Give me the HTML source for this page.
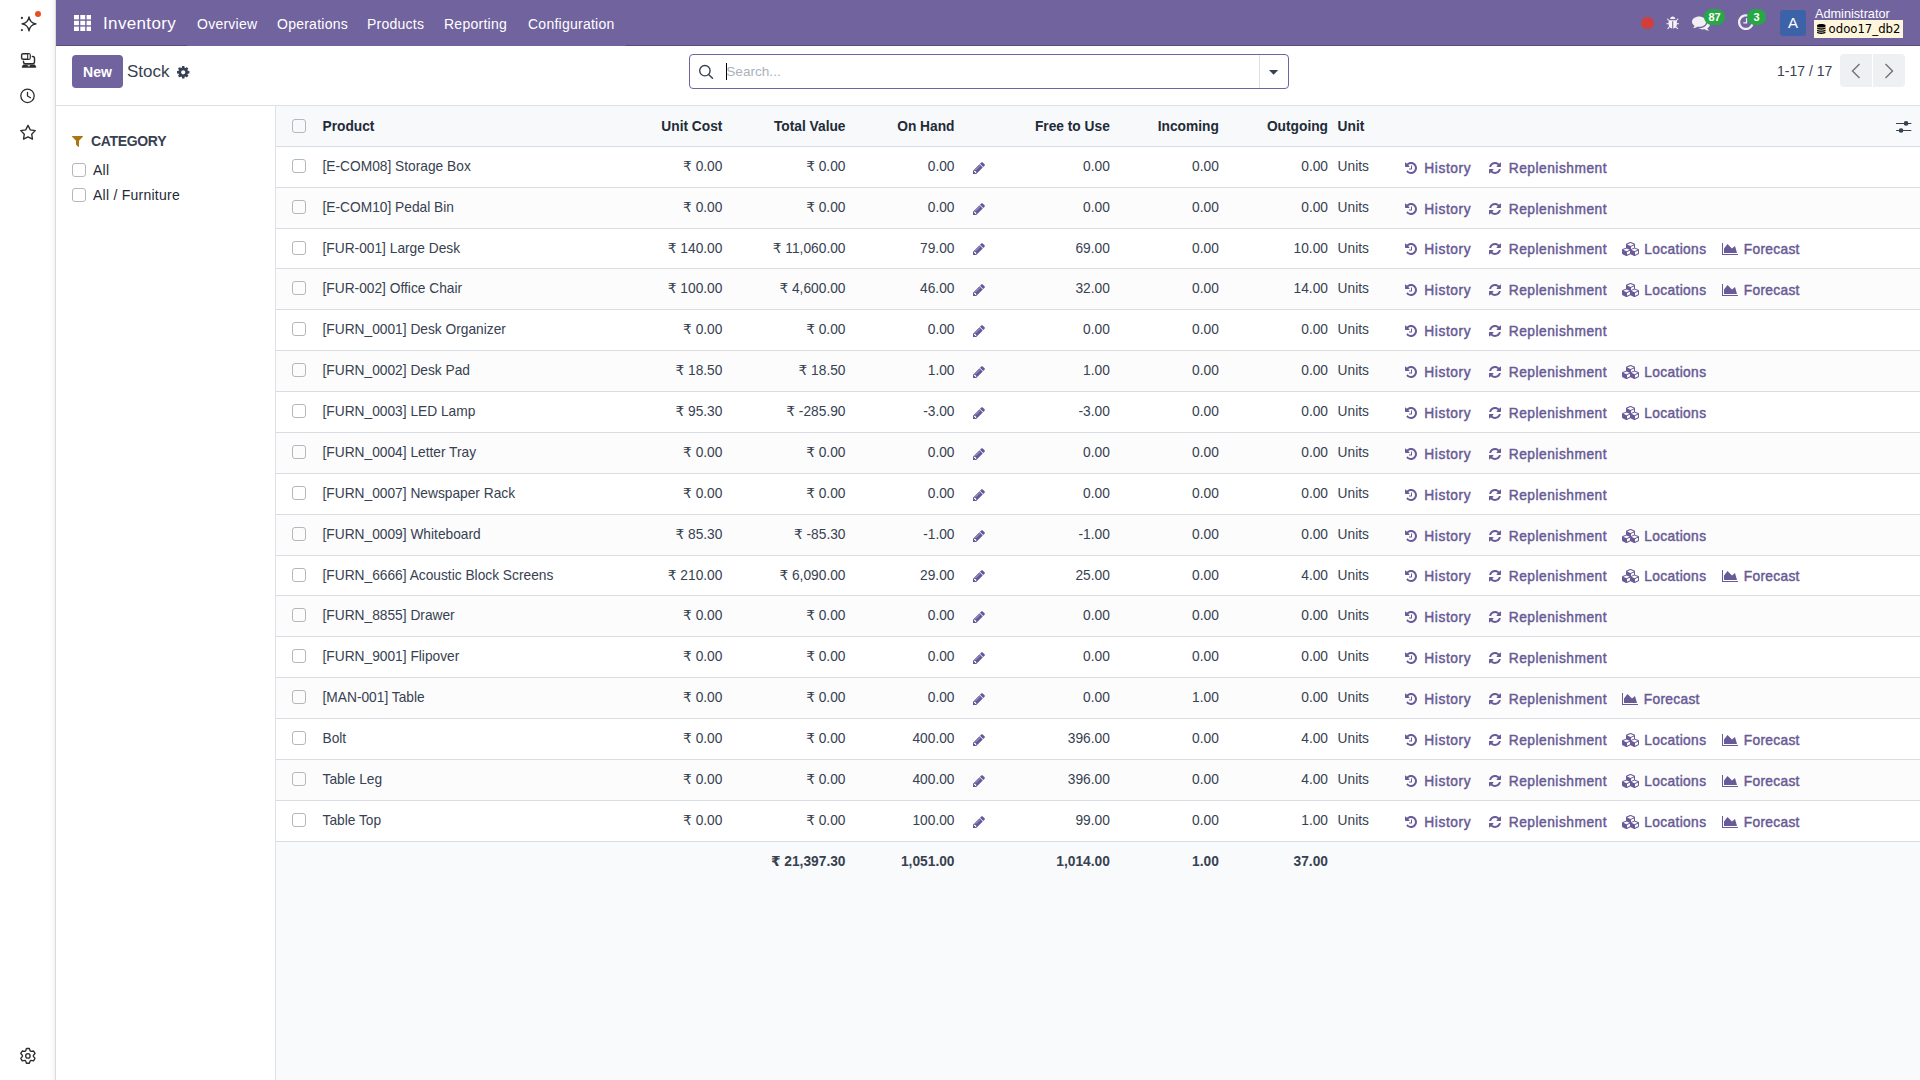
<!DOCTYPE html>
<html lang="en"><head><meta charset="utf-8"><title>Odoo - Stock</title>
<style>
*{box-sizing:border-box;margin:0;padding:0}
html,body{width:1920px;height:1080px;overflow:hidden;background:#fff}
body{font-family:"Liberation Sans","DejaVu Sans",sans-serif;font-size:14px;color:#374151;position:relative}
svg{display:block}
svg.fa{display:inline-block;overflow:visible}
.side{position:absolute;left:0;top:0;width:56px;height:1080px;background:#fff;border-right:1px solid #d8dadd;box-shadow:inset -5px 0 5px -4px rgba(0,0,0,.07)}
.side .si{position:absolute}
.nav{position:absolute;left:56px;top:0;width:1864px;height:46px;background:#71639e;color:#fff}
.nline{position:absolute;left:0;top:45px;width:131px;height:1px;background:#574b7c}
.nav .apps{position:absolute;left:17.8px;top:15px}
.brand{position:absolute;left:47px;top:14px;font-size:17px;line-height:20px;letter-spacing:.35px}
.mi{position:absolute;top:15px;font-size:14px;line-height:18px;letter-spacing:.25px;color:#fff}
.reddot{position:absolute;left:1585.3px;top:17.3px;width:12.6px;height:11.6px;border-radius:50%;background:#d23f3a}
.badge{position:absolute;top:9px;height:16px;border-radius:8px;background:#28a745;color:#fff;font-size:11px;line-height:16px;text-align:center;font-weight:700}
.avatar{position:absolute;left:1724px;top:10px;width:26px;height:26px;border-radius:3px;background:#3c62a8;color:#fff;font-size:15px;line-height:26px;text-align:center}
.uname{position:absolute;left:1759px;top:6.7px;font-size:12.7px;line-height:15px}
.db{position:absolute;left:1758px;top:20px;width:89px;height:18px;background:#fdf5dc;color:#000;font-family:"DejaVu Sans",sans-serif;font-size:11.7px;line-height:18px;padding-left:3px;white-space:nowrap}
.cp{position:absolute;left:56px;top:46px;width:1864px;height:60px;background:#fff;border-bottom:1px solid #dee2e6}
.new{position:absolute;left:16px;top:9px;width:51px;height:33px;border-radius:4px;background:#71639e;color:#fff;font-weight:700;font-size:14px;line-height:35px;text-align:center}
.title{position:absolute;left:71px;top:14.8px;font-size:17px;line-height:22px;color:#374151}
.search{position:absolute;left:633px;top:8px;width:600px;height:35px;border:1px solid #71639e;border-radius:4px;background:#fff}
.caretline{position:absolute;left:36px;top:8px;width:1px;height:17px;background:#000}
.ph{position:absolute;left:36.3px;top:8px;font-size:13.6px;line-height:18px;color:#aab1bc}
.sdiv{position:absolute;left:569px;top:0;width:1px;height:33px;background:#dee2e6}
.pager{position:absolute;left:1721px;top:16px;font-size:14px;line-height:18px}
.pbtn{position:absolute;top:8px;width:32px;height:33px;background:#eef0f2;display:flex;align-items:center;justify-content:center}
.sp{position:absolute;left:56px;top:106px;width:220px;height:974px;background:#fff;border-right:1px solid #dee2e6}
.cat{position:absolute;left:35px;top:25.8px;font-weight:700;font-size:14px;line-height:18px;letter-spacing:-.33px;color:#374151}
.scb{position:absolute;left:16.3px;margin-top:-1px;width:13.7px;height:13.7px;border:1px solid #b4b7bc;border-radius:3px;background:transparent}
.sl{position:absolute;left:37px;font-size:14px;line-height:22px;letter-spacing:.25px;color:#1f2937}
.list{position:absolute;left:276px;top:106px;width:1644px;height:974px;background:#f9fafb}
.row{position:absolute;left:0;width:1644px;border-bottom:1px solid #d8dde3;background:#fff;white-space:nowrap}
.row.odd{background:#fcfcfc}
.row.head{top:0;height:41px;background:#f8f9fa;font-weight:700;color:#222b38}
.head .c{top:11.2px}
.head .cb{top:13.3px}
.row.foot{background:transparent;border-bottom:0;font-weight:700}
.cb{position:absolute;left:16.25px;top:12.3px;width:13.5px;height:13.5px;border:1px solid #b4b7bc;border-radius:3px;background:transparent}
.c{position:absolute;top:10.2px;line-height:20px;font-size:13.75px}
.name{left:46.5px}
.n{text-align:right}
.uc{right:1197.6px}.tv{right:1074.5px}.oh{right:965.5px}.fu{right:810.2px}.inc{right:701.2px}.out{right:592px}
.unit{left:1061.6px}
.pen{position:absolute;left:697px;top:13px;color:#65579a}
.bi{position:absolute;top:13.2px;color:#695b98}
.bt{position:absolute;top:10.5px;line-height:20px;font-size:13.75px;color:#685a95;-webkit-text-stroke:.45px #685a95}
.tH{letter-spacing:.6px}.tR{letter-spacing:.5px}.tL{letter-spacing:.37px}.tF{letter-spacing:.3px}
.adj{position:absolute;left:1619.5px;top:14px}
.h41 .bi{top:14.2px}.h41 .bt{top:11.5px}.h41 .pen{top:14px}

</style></head>
<body>
<div class="side">
<svg class="si" style="left:0;top:0" width="56" height="150" viewBox="0 0 56 150">
<path d="M29 16.9 Q29.9 23.0 36.0 23.9 Q29.9 24.799999999999997 29 30.9 Q28.1 24.799999999999997 22.0 23.9 Q28.1 23.0 29 16.9Z" fill="none" stroke="#2c2c2c" stroke-width="1.35" stroke-linejoin="round"/>
<circle cx="21.900" cy="18" r="1.150" fill="#3a3a3a"/><circle cx="21.900" cy="30.100" r="1.150" fill="#3a3a3a"/>
<circle cx="38" cy="13.900" r="3" fill="#e8501f"/>
<rect x="21.600" y="53.800" width="8.600" height="5.400" rx="1.500" fill="none" stroke="#2c2c2c" stroke-width="1.400"/>
<path d="M27.700 54v5" stroke="#2c2c2c" stroke-width="1.100"/><rect x="28" y="54.400" width="1.800" height="4.200" fill="#cfcfcf"/>
<path d="M32.400 56.500h0.300a1.800 1.800 0 0 1 1.800 1.800v3.400a2 2 0 0 1-2 2h-7a2 2 0 0 1-2-2v-0.600" fill="none" stroke="#2c2c2c" stroke-width="1.400" stroke-linecap="round"/>
<path d="M23.300 64.600h11.400l1.400 1.800a.8.800 0 0 1-.6 1.300h-13a.8.800 0 0 1-.6-1.300z" fill="#2c2c2c"/>
<rect x="27.500" y="65.200" width="2.600" height="1" rx=".5" fill="#fff"/>
<circle cx="27.500" cy="95.850" r="6.700" fill="none" stroke="#2c2c2c" stroke-width="1.300"/>
<path d="M27.500 92.300v3.700l3 1.700" fill="none" stroke="#2c2c2c" stroke-width="1.300" stroke-linecap="round" stroke-linejoin="round"/>
<path d="M28.00 125.40 L25.71 129.84 L20.77 130.65 L24.29 134.21 L23.53 139.15 L28.00 136.90 L32.47 139.15 L31.71 134.21 L35.23 130.65 L30.29 129.84Z" fill="none" stroke="#2c2c2c" stroke-width="1.350" stroke-linejoin="round"/>
</svg>
<svg class="si" style="left:0;top:1040px" width="56" height="40" viewBox="0 1040 56 40">
<path d="M30.22 1050.92 L29.33 1048.54 L26.47 1048.54 L25.58 1050.92 L24.75 1051.39 L22.24 1050.98 L20.81 1053.46 L22.42 1055.42 L22.42 1056.38 L20.81 1058.34 L22.24 1060.82 L24.75 1060.41 L25.58 1060.88 L26.47 1063.26 L29.33 1063.26 L30.22 1060.88 L31.05 1060.41 L33.56 1060.82 L34.99 1058.34 L33.38 1056.38 L33.38 1055.42 L34.99 1053.46 L33.56 1050.98 L31.05 1051.39Z" fill="none" stroke="#2c2c2c" stroke-width="1.350" stroke-linejoin="round"/>
<circle cx="27.900" cy="1055.900" r="2.200" fill="none" stroke="#2c2c2c" stroke-width="1.300"/></svg>
</div>
<div class="nav">
 <svg class="apps" width="17.500" height="16" viewBox="0 0 17.500 16"><g fill="#fff"><rect x="0" y="0" width="4.900" height="4.400"/><rect x="6.3" y="0" width="4.900" height="4.400"/><rect x="12.6" y="0" width="4.900" height="4.400"/><rect x="0" y="5.8" width="4.900" height="4.400"/><rect x="6.3" y="5.8" width="4.900" height="4.400"/><rect x="12.6" y="5.8" width="4.900" height="4.400"/><rect x="0" y="11.6" width="4.900" height="4.400"/><rect x="6.3" y="11.6" width="4.900" height="4.400"/><rect x="12.6" y="11.6" width="4.900" height="4.400"/></g></svg>
 <span class="nline"></span><span class="nline" style="left:570px;width:1294px"></span>
 <span class="brand">Inventory</span>
 <span class="mi" style="left:141px">Overview</span>
 <span class="mi" style="left:221px">Operations</span>
 <span class="mi" style="left:311px">Products</span>
 <span class="mi" style="left:388px">Reporting</span>
 <span class="mi" style="left:472px">Configuration</span>
 <span class="reddot"></span>
 <svg class="fa " viewBox="0 0 1664 1792" width="13.46" height="14.5" style="position:absolute;left:1610.3px;top:15.6px;opacity:.92"><path fill="#fff" d="M1632 960C1632 925 1603 896 1568 896H1344C1344 768 1344 668 1344 602L1517 429C1542 404 1542 364 1517 339C1492 314 1452 314 1427 339L1254 512H410L237 339C212 314 172 314 147 339C122 364 122 404 147 429L320 602C320 668 320 768 320 896H96C61 896 32 925 32 960C32 995 61 1024 96 1024H320C320 1140 343 1229 378 1298L176 1525C153 1552 155 1592 181 1616C194 1627 209 1632 224 1632C242 1632 259 1625 272 1611L455 1404C455 1404 587 1536 768 1536V640H896V1536C1066 1536 1197 1416 1197 1416L1395 1613C1407 1626 1424 1632 1440 1632C1456 1632 1473 1626 1485 1613C1510 1588 1510 1548 1485 1523L1277 1314C1317 1243 1344 1149 1344 1024H1568C1603 1024 1632 995 1632 960ZM1152 384C1152 207 1009 64 832 64C655 64 512 207 512 384H1152Z"/></svg>
 <svg class="fa " viewBox="0 0 1792 1792" width="18.00" height="18" style="position:absolute;left:1636px;top:13.8px;opacity:.9"><path fill="#fff" d="M1408 768C1408 485 1093 256 704 256C315 256 0 485 0 768C0 930 104 1075 266 1169C232 1252 188 1291 149 1335C138 1348 125 1360 129 1379C129 1379 129 1379 129 1379C132 1396 146 1408 161 1408C162 1408 163 1408 164 1408C194 1404 223 1399 250 1392C351 1366 445 1323 528 1264C584 1274 643 1280 704 1280C1093 1280 1408 1051 1408 768ZM1792 1024C1792 857 1682 709 1513 616C1528 665 1536 716 1536 768C1536 947 1444 1112 1277 1234C1122 1346 919 1408 704 1408C675 1408 645 1406 616 1404C741 1486 907 1536 1088 1536C1149 1536 1208 1530 1264 1520C1347 1579 1441 1622 1542 1648C1569 1655 1598 1660 1628 1664C1644 1666 1659 1653 1663 1635C1663 1635 1663 1635 1663 1635C1667 1616 1654 1604 1643 1591C1604 1547 1560 1508 1526 1425C1688 1331 1792 1187 1792 1024Z"/></svg>
 <span class="badge" style="left:1648px;width:21px">87</span>
 <svg class="fa " viewBox="0 0 1536 1792" width="15.77" height="18.4" style="position:absolute;left:1682.4px;top:13.2px;opacity:.9"><path fill="#fff" d="M896 544C896 526 882 512 864 512H800C782 512 768 526 768 544V896H544C526 896 512 910 512 928V992C512 1010 526 1024 544 1024H864C882 1024 896 1010 896 992ZM1312 896C1312 1196 1068 1440 768 1440C468 1440 224 1196 224 896C224 596 468 352 768 352C1068 352 1312 596 1312 896ZM1536 896C1536 472 1192 128 768 128C344 128 0 472 0 896C0 1320 344 1664 768 1664C1192 1664 1536 1320 1536 896Z"/></svg>
 <span class="badge" style="left:1691px;width:19px">3</span>
 <span class="avatar">A</span>
 <span class="uname">Administrator</span>
 <span class="db"><svg class="fa " viewBox="0 0 1536 1792" width="8.57" height="10" style="vertical-align:-1px;margin-right:3px"><path fill="#000" d="M768 768C467 768 165 714 0 598V768C0 909 344 1024 768 1024C1192 1024 1536 909 1536 768V598C1371 714 1069 768 768 768ZM768 1536C467 1536 165 1482 0 1366V1536C0 1677 344 1792 768 1792C1192 1792 1536 1677 1536 1536V1366C1371 1482 1069 1536 768 1536ZM768 1152C467 1152 165 1098 0 982V1152C0 1293 344 1408 768 1408C1192 1408 1536 1293 1536 1152V982C1371 1098 1069 1152 768 1152ZM768 0C344 0 0 115 0 256V384C0 525 344 640 768 640C1192 640 1536 525 1536 384V256C1536 115 1192 0 768 0Z"/></svg><span>odoo17_db2</span></span>
</div>
<div class="cp">
 <span class="new">New</span>
 <span class="title">Stock</span>
 <svg class="fa " viewBox="0 0 1536 1792" width="12.43" height="14.5" style="position:absolute;left:121px;top:19px"><path fill="#374151" d="M1024 896C1024 1037 909 1152 768 1152C627 1152 512 1037 512 896C512 755 627 640 768 640C909 640 1024 755 1024 896ZM1536 787C1536 770 1524 754 1507 751L1324 723C1314 690 1300 657 1283 625C1317 578 1354 534 1388 488C1393 481 1396 474 1396 465C1396 457 1394 449 1389 443C1347 384 1277 322 1224 273C1217 267 1208 263 1199 263C1190 263 1181 266 1175 272L1033 379C1004 364 974 352 943 342L915 158C913 141 897 128 879 128H657C639 128 625 140 621 156C605 216 599 281 592 342C561 352 530 365 501 380L363 273C355 267 346 263 337 263C303 263 168 409 144 442C139 449 135 456 135 465C135 474 139 482 145 489C182 534 218 579 252 627C236 657 223 687 213 719L27 747C12 750 0 768 0 783V1005C0 1022 12 1038 29 1041L212 1068C222 1102 236 1135 253 1167C219 1214 182 1258 148 1304C143 1311 140 1318 140 1327C140 1335 142 1343 147 1350C189 1408 259 1470 312 1518C319 1525 328 1529 337 1529C346 1529 355 1526 362 1520L503 1413C532 1428 562 1440 593 1450L621 1634C623 1651 639 1664 657 1664H879C897 1664 911 1652 915 1636C931 1576 937 1511 944 1450C975 1440 1006 1427 1035 1412L1173 1520C1181 1525 1190 1529 1199 1529C1233 1529 1368 1382 1392 1350C1398 1343 1401 1336 1401 1327C1401 1318 1397 1309 1391 1302C1354 1257 1318 1213 1284 1164C1300 1135 1312 1105 1323 1073L1508 1045C1524 1042 1536 1024 1536 1009Z"/></svg>
 <div class="search">
  <svg style="position:absolute;left:7px;top:8px" width="20" height="20" viewBox="0 0 20 20"><circle cx="7.900" cy="7.700" r="5.200" fill="none" stroke="#374151" stroke-width="1.400"/><path d="M11.600 11.500l3.900 3.700" stroke="#374151" stroke-width="1.500" stroke-linecap="round"/></svg>
  <span class="caretline"></span>
  <span class="ph">Search...</span>
  <span class="sdiv"></span>
  <svg style="position:absolute;left:578.900px;top:15px" width="10" height="6" viewBox="0 0 10 6"><path d="M0 0h9.200L4.600 4.800z" fill="#374151"/></svg>
 </div>
 <span class="pager">1-17 / 17</span>
 <span class="pbtn" style="left:1784px;border-radius:4px 0 0 4px"><svg width="12" height="18" viewBox="0 0 12 18"><path d="M9.500 2L2.500 9l7 7" fill="none" stroke="#6f7378" stroke-width="1.400"/></svg></span>
 <span class="pbtn" style="left:1817px;border-radius:0 4px 4px 0"><svg width="12" height="18" viewBox="0 0 12 18"><path d="M2.500 2L9.500 9l-7 7" fill="none" stroke="#6f7378" stroke-width="1.400"/></svg></span>
</div>
<div class="sp">
 <svg class="fa " viewBox="0 0 1408 1792" width="11.00" height="14" style="position:absolute;left:16px;top:28px"><path fill="#ad7511" d="M1403 295C1393 272 1370 256 1344 256H64C38 256 15 272 5 295C-5 319 0 347 19 365L512 858V1344C512 1361 519 1377 531 1389L787 1645C799 1658 815 1664 832 1664C840 1664 849 1662 857 1659C880 1649 896 1626 896 1600V858L1389 365C1408 347 1413 319 1403 295Z"/></svg>
 <span class="cat">CATEGORY</span>
 <span class="scb" style="top:58px"></span><span class="sl" style="top:53px">All</span>
 <span class="scb" style="top:83px"></span><span class="sl" style="top:78px">All / Furniture</span>
</div>
<div class="list">
 <div class="row head"><span class="cb"></span><span class="c name">Product</span><span class="c n uc">Unit Cost</span><span class="c n tv">Total Value</span><span class="c n oh">On Hand</span><span class="c n fu">Free to Use</span><span class="c n inc">Incoming</span><span class="c n out">Outgoing</span><span class="c unit">Unit</span>
 <svg class="adj" width="16" height="14" viewBox="0 0 16 14"><path d="M.5 3.450h14.400M.5 10.500h14.400" stroke="#374151" stroke-width="1.150" stroke-linecap="round"/><circle cx="10.060" cy="3.450" r="2.350" fill="#374151"/><circle cx="5.040" cy="10.500" r="2.350" fill="#374151"/></svg></div>
 <div class="row h41" style="top:41px;height:41px"><span class="cb"></span><span class="c name">[E-COM08] Storage Box</span><span class="c n uc">₹ 0.00</span><span class="c n tv">₹ 0.00</span><span class="c n oh">0.00</span><svg class="fa pen" viewBox="0 0 1536 1792" width="12.00" height="14" style=""><path fill="currentColor" d="M363 1536H256V1408H128V1301L219 1210L454 1445ZM886 608C886 614 884 620 879 625L337 1167C332 1172 326 1174 320 1174C307 1174 298 1165 298 1152C298 1146 300 1140 305 1135L847 593C852 588 858 586 864 586C877 586 886 595 886 608ZM832 416 0 1248V1664H416L1248 832ZM1515 512C1515 478 1501 445 1478 421L1243 187C1219 163 1186 149 1152 149C1118 149 1085 163 1062 187L896 352L1312 768L1478 602C1501 579 1515 546 1515 512Z"/></svg><span class="c n fu">0.00</span><span class="c n inc">0.00</span><span class="c n out">0.00</span><span class="c unit">Units</span><span class="bi" style="left:1128.75px"><svg class="fa " viewBox="0 0 1536 1792" width="12.00" height="14" style=""><path fill="currentColor" d="M1536 896C1536 473 1191 128 768 128C571 128 380 207 239 340L109 211C91 192 63 187 40 197C16 207 0 230 0 256V704C0 739 29 768 64 768H512C538 768 561 752 571 728C581 705 576 677 557 659L420 521C513 434 637 384 768 384C1050 384 1280 614 1280 896C1280 1178 1050 1408 768 1408C609 1408 462 1336 364 1209C359 1202 350 1198 341 1197C332 1197 323 1200 316 1206L179 1344C168 1355 167 1374 177 1387C323 1563 539 1664 768 1664C1191 1664 1536 1319 1536 896ZM896 608C896 590 882 576 864 576H800C782 576 768 590 768 608V960H544C526 960 512 974 512 992V1056C512 1074 526 1088 544 1088H864C882 1088 896 1074 896 1056Z"/></svg></span><span class="bt tH" style="left:1148.25px">History</span><span class="bi" style="left:1213.4px"><svg class="fa " viewBox="0 0 1536 1792" width="12.00" height="14" style=""><path fill="currentColor" d="M1511 1056C1511 1039 1497 1024 1479 1024H1287C1272 1024 1262 1033 1257 1047C1240 1087 1228 1125 1204 1164C1111 1316 946 1408 768 1408C639 1408 514 1358 420 1270L557 1133C569 1121 576 1105 576 1088C576 1053 547 1024 512 1024H64C29 1024 0 1053 0 1088V1536C0 1571 29 1600 64 1600C81 1600 97 1593 109 1581L238 1452C380 1587 569 1664 764 1664C1133 1664 1425 1417 1510 1063C1511 1061 1511 1058 1511 1056ZM1536 256C1536 221 1507 192 1472 192C1455 192 1439 199 1427 211L1297 340C1155 206 964 128 768 128C399 128 104 374 18 729C18 731 18 734 18 736C18 753 32 768 50 768H249C264 768 274 759 279 745C296 705 308 667 332 628C425 476 590 384 768 384C897 384 1022 433 1117 521L979 659C967 671 960 687 960 704C960 739 989 768 1024 768H1472C1507 768 1536 739 1536 704Z"/></svg></span><span class="bt tR" style="left:1232.80px">Replenishment</span></div><div class="row odd h41" style="top:82px;height:41px"><span class="cb"></span><span class="c name">[E-COM10] Pedal Bin</span><span class="c n uc">₹ 0.00</span><span class="c n tv">₹ 0.00</span><span class="c n oh">0.00</span><svg class="fa pen" viewBox="0 0 1536 1792" width="12.00" height="14" style=""><path fill="currentColor" d="M363 1536H256V1408H128V1301L219 1210L454 1445ZM886 608C886 614 884 620 879 625L337 1167C332 1172 326 1174 320 1174C307 1174 298 1165 298 1152C298 1146 300 1140 305 1135L847 593C852 588 858 586 864 586C877 586 886 595 886 608ZM832 416 0 1248V1664H416L1248 832ZM1515 512C1515 478 1501 445 1478 421L1243 187C1219 163 1186 149 1152 149C1118 149 1085 163 1062 187L896 352L1312 768L1478 602C1501 579 1515 546 1515 512Z"/></svg><span class="c n fu">0.00</span><span class="c n inc">0.00</span><span class="c n out">0.00</span><span class="c unit">Units</span><span class="bi" style="left:1128.75px"><svg class="fa " viewBox="0 0 1536 1792" width="12.00" height="14" style=""><path fill="currentColor" d="M1536 896C1536 473 1191 128 768 128C571 128 380 207 239 340L109 211C91 192 63 187 40 197C16 207 0 230 0 256V704C0 739 29 768 64 768H512C538 768 561 752 571 728C581 705 576 677 557 659L420 521C513 434 637 384 768 384C1050 384 1280 614 1280 896C1280 1178 1050 1408 768 1408C609 1408 462 1336 364 1209C359 1202 350 1198 341 1197C332 1197 323 1200 316 1206L179 1344C168 1355 167 1374 177 1387C323 1563 539 1664 768 1664C1191 1664 1536 1319 1536 896ZM896 608C896 590 882 576 864 576H800C782 576 768 590 768 608V960H544C526 960 512 974 512 992V1056C512 1074 526 1088 544 1088H864C882 1088 896 1074 896 1056Z"/></svg></span><span class="bt tH" style="left:1148.25px">History</span><span class="bi" style="left:1213.4px"><svg class="fa " viewBox="0 0 1536 1792" width="12.00" height="14" style=""><path fill="currentColor" d="M1511 1056C1511 1039 1497 1024 1479 1024H1287C1272 1024 1262 1033 1257 1047C1240 1087 1228 1125 1204 1164C1111 1316 946 1408 768 1408C639 1408 514 1358 420 1270L557 1133C569 1121 576 1105 576 1088C576 1053 547 1024 512 1024H64C29 1024 0 1053 0 1088V1536C0 1571 29 1600 64 1600C81 1600 97 1593 109 1581L238 1452C380 1587 569 1664 764 1664C1133 1664 1425 1417 1510 1063C1511 1061 1511 1058 1511 1056ZM1536 256C1536 221 1507 192 1472 192C1455 192 1439 199 1427 211L1297 340C1155 206 964 128 768 128C399 128 104 374 18 729C18 731 18 734 18 736C18 753 32 768 50 768H249C264 768 274 759 279 745C296 705 308 667 332 628C425 476 590 384 768 384C897 384 1022 433 1117 521L979 659C967 671 960 687 960 704C960 739 989 768 1024 768H1472C1507 768 1536 739 1536 704Z"/></svg></span><span class="bt tR" style="left:1232.80px">Replenishment</span></div><div class="row" style="top:123px;height:40px"><span class="cb"></span><span class="c name">[FUR-001] Large Desk</span><span class="c n uc">₹ 140.00</span><span class="c n tv">₹ 11,060.00</span><span class="c n oh">79.00</span><svg class="fa pen" viewBox="0 0 1536 1792" width="12.00" height="14" style=""><path fill="currentColor" d="M363 1536H256V1408H128V1301L219 1210L454 1445ZM886 608C886 614 884 620 879 625L337 1167C332 1172 326 1174 320 1174C307 1174 298 1165 298 1152C298 1146 300 1140 305 1135L847 593C852 588 858 586 864 586C877 586 886 595 886 608ZM832 416 0 1248V1664H416L1248 832ZM1515 512C1515 478 1501 445 1478 421L1243 187C1219 163 1186 149 1152 149C1118 149 1085 163 1062 187L896 352L1312 768L1478 602C1501 579 1515 546 1515 512Z"/></svg><span class="c n fu">69.00</span><span class="c n inc">0.00</span><span class="c n out">10.00</span><span class="c unit">Units</span><span class="bi" style="left:1128.75px"><svg class="fa " viewBox="0 0 1536 1792" width="12.00" height="14" style=""><path fill="currentColor" d="M1536 896C1536 473 1191 128 768 128C571 128 380 207 239 340L109 211C91 192 63 187 40 197C16 207 0 230 0 256V704C0 739 29 768 64 768H512C538 768 561 752 571 728C581 705 576 677 557 659L420 521C513 434 637 384 768 384C1050 384 1280 614 1280 896C1280 1178 1050 1408 768 1408C609 1408 462 1336 364 1209C359 1202 350 1198 341 1197C332 1197 323 1200 316 1206L179 1344C168 1355 167 1374 177 1387C323 1563 539 1664 768 1664C1191 1664 1536 1319 1536 896ZM896 608C896 590 882 576 864 576H800C782 576 768 590 768 608V960H544C526 960 512 974 512 992V1056C512 1074 526 1088 544 1088H864C882 1088 896 1074 896 1056Z"/></svg></span><span class="bt tH" style="left:1148.25px">History</span><span class="bi" style="left:1213.4px"><svg class="fa " viewBox="0 0 1536 1792" width="12.00" height="14" style=""><path fill="currentColor" d="M1511 1056C1511 1039 1497 1024 1479 1024H1287C1272 1024 1262 1033 1257 1047C1240 1087 1228 1125 1204 1164C1111 1316 946 1408 768 1408C639 1408 514 1358 420 1270L557 1133C569 1121 576 1105 576 1088C576 1053 547 1024 512 1024H64C29 1024 0 1053 0 1088V1536C0 1571 29 1600 64 1600C81 1600 97 1593 109 1581L238 1452C380 1587 569 1664 764 1664C1133 1664 1425 1417 1510 1063C1511 1061 1511 1058 1511 1056ZM1536 256C1536 221 1507 192 1472 192C1455 192 1439 199 1427 211L1297 340C1155 206 964 128 768 128C399 128 104 374 18 729C18 731 18 734 18 736C18 753 32 768 50 768H249C264 768 274 759 279 745C296 705 308 667 332 628C425 476 590 384 768 384C897 384 1022 433 1117 521L979 659C967 671 960 687 960 704C960 739 989 768 1024 768H1472C1507 768 1536 739 1536 704Z"/></svg></span><span class="bt tR" style="left:1232.80px">Replenishment</span><span class="bi" style="left:1346.1px"><svg class="fa " viewBox="0 0 2304 1792" width="18.00" height="14" style=""><path fill="currentColor" d="M640 1632V1290L1024 1126V1440ZM576 1178 172 1005 576 832 980 1005ZM1664 1632V1290L2048 1126V1440ZM1600 1178 1196 1005 1600 832 2004 1005ZM1152 885V618L1536 454V720ZM1088 506 647 317 1088 128 1529 317ZM2176 1024C2176 973 2146 927 2098 906L1664 720V320C1664 269 1633 223 1586 202L1138 10C1122 3 1105 0 1088 0C1071 0 1054 3 1038 10L590 202C543 223 512 269 512 320V720L78 906C31 927 0 973 0 1024V1440C0 1488 27 1533 71 1554L519 1778C537 1788 556 1792 576 1792C596 1792 615 1788 633 1778L1081 1554C1084 1553 1086 1552 1088 1550C1090 1552 1092 1553 1095 1554L1543 1778C1561 1788 1580 1792 1600 1792C1620 1792 1639 1788 1657 1778L2105 1554C2149 1533 2176 1488 2176 1440Z"/></svg></span><span class="bt tL" style="left:1368.20px">Locations</span><span class="bi" style="left:1446.1px"><svg class="fa " viewBox="0 0 2048 1792" width="16.00" height="14" style=""><path fill="currentColor" d="M2048 1536H128V128H0V1664H2048ZM1664 512 1280 832 704 256 256 832V1408H1920Z"/></svg></span><span class="bt tF" style="left:1467.80px">Forecast</span></div><div class="row odd h41" style="top:163px;height:41px"><span class="cb"></span><span class="c name">[FUR-002] Office Chair</span><span class="c n uc">₹ 100.00</span><span class="c n tv">₹ 4,600.00</span><span class="c n oh">46.00</span><svg class="fa pen" viewBox="0 0 1536 1792" width="12.00" height="14" style=""><path fill="currentColor" d="M363 1536H256V1408H128V1301L219 1210L454 1445ZM886 608C886 614 884 620 879 625L337 1167C332 1172 326 1174 320 1174C307 1174 298 1165 298 1152C298 1146 300 1140 305 1135L847 593C852 588 858 586 864 586C877 586 886 595 886 608ZM832 416 0 1248V1664H416L1248 832ZM1515 512C1515 478 1501 445 1478 421L1243 187C1219 163 1186 149 1152 149C1118 149 1085 163 1062 187L896 352L1312 768L1478 602C1501 579 1515 546 1515 512Z"/></svg><span class="c n fu">32.00</span><span class="c n inc">0.00</span><span class="c n out">14.00</span><span class="c unit">Units</span><span class="bi" style="left:1128.75px"><svg class="fa " viewBox="0 0 1536 1792" width="12.00" height="14" style=""><path fill="currentColor" d="M1536 896C1536 473 1191 128 768 128C571 128 380 207 239 340L109 211C91 192 63 187 40 197C16 207 0 230 0 256V704C0 739 29 768 64 768H512C538 768 561 752 571 728C581 705 576 677 557 659L420 521C513 434 637 384 768 384C1050 384 1280 614 1280 896C1280 1178 1050 1408 768 1408C609 1408 462 1336 364 1209C359 1202 350 1198 341 1197C332 1197 323 1200 316 1206L179 1344C168 1355 167 1374 177 1387C323 1563 539 1664 768 1664C1191 1664 1536 1319 1536 896ZM896 608C896 590 882 576 864 576H800C782 576 768 590 768 608V960H544C526 960 512 974 512 992V1056C512 1074 526 1088 544 1088H864C882 1088 896 1074 896 1056Z"/></svg></span><span class="bt tH" style="left:1148.25px">History</span><span class="bi" style="left:1213.4px"><svg class="fa " viewBox="0 0 1536 1792" width="12.00" height="14" style=""><path fill="currentColor" d="M1511 1056C1511 1039 1497 1024 1479 1024H1287C1272 1024 1262 1033 1257 1047C1240 1087 1228 1125 1204 1164C1111 1316 946 1408 768 1408C639 1408 514 1358 420 1270L557 1133C569 1121 576 1105 576 1088C576 1053 547 1024 512 1024H64C29 1024 0 1053 0 1088V1536C0 1571 29 1600 64 1600C81 1600 97 1593 109 1581L238 1452C380 1587 569 1664 764 1664C1133 1664 1425 1417 1510 1063C1511 1061 1511 1058 1511 1056ZM1536 256C1536 221 1507 192 1472 192C1455 192 1439 199 1427 211L1297 340C1155 206 964 128 768 128C399 128 104 374 18 729C18 731 18 734 18 736C18 753 32 768 50 768H249C264 768 274 759 279 745C296 705 308 667 332 628C425 476 590 384 768 384C897 384 1022 433 1117 521L979 659C967 671 960 687 960 704C960 739 989 768 1024 768H1472C1507 768 1536 739 1536 704Z"/></svg></span><span class="bt tR" style="left:1232.80px">Replenishment</span><span class="bi" style="left:1346.1px"><svg class="fa " viewBox="0 0 2304 1792" width="18.00" height="14" style=""><path fill="currentColor" d="M640 1632V1290L1024 1126V1440ZM576 1178 172 1005 576 832 980 1005ZM1664 1632V1290L2048 1126V1440ZM1600 1178 1196 1005 1600 832 2004 1005ZM1152 885V618L1536 454V720ZM1088 506 647 317 1088 128 1529 317ZM2176 1024C2176 973 2146 927 2098 906L1664 720V320C1664 269 1633 223 1586 202L1138 10C1122 3 1105 0 1088 0C1071 0 1054 3 1038 10L590 202C543 223 512 269 512 320V720L78 906C31 927 0 973 0 1024V1440C0 1488 27 1533 71 1554L519 1778C537 1788 556 1792 576 1792C596 1792 615 1788 633 1778L1081 1554C1084 1553 1086 1552 1088 1550C1090 1552 1092 1553 1095 1554L1543 1778C1561 1788 1580 1792 1600 1792C1620 1792 1639 1788 1657 1778L2105 1554C2149 1533 2176 1488 2176 1440Z"/></svg></span><span class="bt tL" style="left:1368.20px">Locations</span><span class="bi" style="left:1446.1px"><svg class="fa " viewBox="0 0 2048 1792" width="16.00" height="14" style=""><path fill="currentColor" d="M2048 1536H128V128H0V1664H2048ZM1664 512 1280 832 704 256 256 832V1408H1920Z"/></svg></span><span class="bt tF" style="left:1467.80px">Forecast</span></div><div class="row h41" style="top:204px;height:41px"><span class="cb"></span><span class="c name">[FURN_0001] Desk Organizer</span><span class="c n uc">₹ 0.00</span><span class="c n tv">₹ 0.00</span><span class="c n oh">0.00</span><svg class="fa pen" viewBox="0 0 1536 1792" width="12.00" height="14" style=""><path fill="currentColor" d="M363 1536H256V1408H128V1301L219 1210L454 1445ZM886 608C886 614 884 620 879 625L337 1167C332 1172 326 1174 320 1174C307 1174 298 1165 298 1152C298 1146 300 1140 305 1135L847 593C852 588 858 586 864 586C877 586 886 595 886 608ZM832 416 0 1248V1664H416L1248 832ZM1515 512C1515 478 1501 445 1478 421L1243 187C1219 163 1186 149 1152 149C1118 149 1085 163 1062 187L896 352L1312 768L1478 602C1501 579 1515 546 1515 512Z"/></svg><span class="c n fu">0.00</span><span class="c n inc">0.00</span><span class="c n out">0.00</span><span class="c unit">Units</span><span class="bi" style="left:1128.75px"><svg class="fa " viewBox="0 0 1536 1792" width="12.00" height="14" style=""><path fill="currentColor" d="M1536 896C1536 473 1191 128 768 128C571 128 380 207 239 340L109 211C91 192 63 187 40 197C16 207 0 230 0 256V704C0 739 29 768 64 768H512C538 768 561 752 571 728C581 705 576 677 557 659L420 521C513 434 637 384 768 384C1050 384 1280 614 1280 896C1280 1178 1050 1408 768 1408C609 1408 462 1336 364 1209C359 1202 350 1198 341 1197C332 1197 323 1200 316 1206L179 1344C168 1355 167 1374 177 1387C323 1563 539 1664 768 1664C1191 1664 1536 1319 1536 896ZM896 608C896 590 882 576 864 576H800C782 576 768 590 768 608V960H544C526 960 512 974 512 992V1056C512 1074 526 1088 544 1088H864C882 1088 896 1074 896 1056Z"/></svg></span><span class="bt tH" style="left:1148.25px">History</span><span class="bi" style="left:1213.4px"><svg class="fa " viewBox="0 0 1536 1792" width="12.00" height="14" style=""><path fill="currentColor" d="M1511 1056C1511 1039 1497 1024 1479 1024H1287C1272 1024 1262 1033 1257 1047C1240 1087 1228 1125 1204 1164C1111 1316 946 1408 768 1408C639 1408 514 1358 420 1270L557 1133C569 1121 576 1105 576 1088C576 1053 547 1024 512 1024H64C29 1024 0 1053 0 1088V1536C0 1571 29 1600 64 1600C81 1600 97 1593 109 1581L238 1452C380 1587 569 1664 764 1664C1133 1664 1425 1417 1510 1063C1511 1061 1511 1058 1511 1056ZM1536 256C1536 221 1507 192 1472 192C1455 192 1439 199 1427 211L1297 340C1155 206 964 128 768 128C399 128 104 374 18 729C18 731 18 734 18 736C18 753 32 768 50 768H249C264 768 274 759 279 745C296 705 308 667 332 628C425 476 590 384 768 384C897 384 1022 433 1117 521L979 659C967 671 960 687 960 704C960 739 989 768 1024 768H1472C1507 768 1536 739 1536 704Z"/></svg></span><span class="bt tR" style="left:1232.80px">Replenishment</span></div><div class="row odd h41" style="top:245px;height:41px"><span class="cb"></span><span class="c name">[FURN_0002] Desk Pad</span><span class="c n uc">₹ 18.50</span><span class="c n tv">₹ 18.50</span><span class="c n oh">1.00</span><svg class="fa pen" viewBox="0 0 1536 1792" width="12.00" height="14" style=""><path fill="currentColor" d="M363 1536H256V1408H128V1301L219 1210L454 1445ZM886 608C886 614 884 620 879 625L337 1167C332 1172 326 1174 320 1174C307 1174 298 1165 298 1152C298 1146 300 1140 305 1135L847 593C852 588 858 586 864 586C877 586 886 595 886 608ZM832 416 0 1248V1664H416L1248 832ZM1515 512C1515 478 1501 445 1478 421L1243 187C1219 163 1186 149 1152 149C1118 149 1085 163 1062 187L896 352L1312 768L1478 602C1501 579 1515 546 1515 512Z"/></svg><span class="c n fu">1.00</span><span class="c n inc">0.00</span><span class="c n out">0.00</span><span class="c unit">Units</span><span class="bi" style="left:1128.75px"><svg class="fa " viewBox="0 0 1536 1792" width="12.00" height="14" style=""><path fill="currentColor" d="M1536 896C1536 473 1191 128 768 128C571 128 380 207 239 340L109 211C91 192 63 187 40 197C16 207 0 230 0 256V704C0 739 29 768 64 768H512C538 768 561 752 571 728C581 705 576 677 557 659L420 521C513 434 637 384 768 384C1050 384 1280 614 1280 896C1280 1178 1050 1408 768 1408C609 1408 462 1336 364 1209C359 1202 350 1198 341 1197C332 1197 323 1200 316 1206L179 1344C168 1355 167 1374 177 1387C323 1563 539 1664 768 1664C1191 1664 1536 1319 1536 896ZM896 608C896 590 882 576 864 576H800C782 576 768 590 768 608V960H544C526 960 512 974 512 992V1056C512 1074 526 1088 544 1088H864C882 1088 896 1074 896 1056Z"/></svg></span><span class="bt tH" style="left:1148.25px">History</span><span class="bi" style="left:1213.4px"><svg class="fa " viewBox="0 0 1536 1792" width="12.00" height="14" style=""><path fill="currentColor" d="M1511 1056C1511 1039 1497 1024 1479 1024H1287C1272 1024 1262 1033 1257 1047C1240 1087 1228 1125 1204 1164C1111 1316 946 1408 768 1408C639 1408 514 1358 420 1270L557 1133C569 1121 576 1105 576 1088C576 1053 547 1024 512 1024H64C29 1024 0 1053 0 1088V1536C0 1571 29 1600 64 1600C81 1600 97 1593 109 1581L238 1452C380 1587 569 1664 764 1664C1133 1664 1425 1417 1510 1063C1511 1061 1511 1058 1511 1056ZM1536 256C1536 221 1507 192 1472 192C1455 192 1439 199 1427 211L1297 340C1155 206 964 128 768 128C399 128 104 374 18 729C18 731 18 734 18 736C18 753 32 768 50 768H249C264 768 274 759 279 745C296 705 308 667 332 628C425 476 590 384 768 384C897 384 1022 433 1117 521L979 659C967 671 960 687 960 704C960 739 989 768 1024 768H1472C1507 768 1536 739 1536 704Z"/></svg></span><span class="bt tR" style="left:1232.80px">Replenishment</span><span class="bi" style="left:1346.1px"><svg class="fa " viewBox="0 0 2304 1792" width="18.00" height="14" style=""><path fill="currentColor" d="M640 1632V1290L1024 1126V1440ZM576 1178 172 1005 576 832 980 1005ZM1664 1632V1290L2048 1126V1440ZM1600 1178 1196 1005 1600 832 2004 1005ZM1152 885V618L1536 454V720ZM1088 506 647 317 1088 128 1529 317ZM2176 1024C2176 973 2146 927 2098 906L1664 720V320C1664 269 1633 223 1586 202L1138 10C1122 3 1105 0 1088 0C1071 0 1054 3 1038 10L590 202C543 223 512 269 512 320V720L78 906C31 927 0 973 0 1024V1440C0 1488 27 1533 71 1554L519 1778C537 1788 556 1792 576 1792C596 1792 615 1788 633 1778L1081 1554C1084 1553 1086 1552 1088 1550C1090 1552 1092 1553 1095 1554L1543 1778C1561 1788 1580 1792 1600 1792C1620 1792 1639 1788 1657 1778L2105 1554C2149 1533 2176 1488 2176 1440Z"/></svg></span><span class="bt tL" style="left:1368.20px">Locations</span></div><div class="row h41" style="top:286px;height:41px"><span class="cb"></span><span class="c name">[FURN_0003] LED Lamp</span><span class="c n uc">₹ 95.30</span><span class="c n tv">₹ -285.90</span><span class="c n oh">-3.00</span><svg class="fa pen" viewBox="0 0 1536 1792" width="12.00" height="14" style=""><path fill="currentColor" d="M363 1536H256V1408H128V1301L219 1210L454 1445ZM886 608C886 614 884 620 879 625L337 1167C332 1172 326 1174 320 1174C307 1174 298 1165 298 1152C298 1146 300 1140 305 1135L847 593C852 588 858 586 864 586C877 586 886 595 886 608ZM832 416 0 1248V1664H416L1248 832ZM1515 512C1515 478 1501 445 1478 421L1243 187C1219 163 1186 149 1152 149C1118 149 1085 163 1062 187L896 352L1312 768L1478 602C1501 579 1515 546 1515 512Z"/></svg><span class="c n fu">-3.00</span><span class="c n inc">0.00</span><span class="c n out">0.00</span><span class="c unit">Units</span><span class="bi" style="left:1128.75px"><svg class="fa " viewBox="0 0 1536 1792" width="12.00" height="14" style=""><path fill="currentColor" d="M1536 896C1536 473 1191 128 768 128C571 128 380 207 239 340L109 211C91 192 63 187 40 197C16 207 0 230 0 256V704C0 739 29 768 64 768H512C538 768 561 752 571 728C581 705 576 677 557 659L420 521C513 434 637 384 768 384C1050 384 1280 614 1280 896C1280 1178 1050 1408 768 1408C609 1408 462 1336 364 1209C359 1202 350 1198 341 1197C332 1197 323 1200 316 1206L179 1344C168 1355 167 1374 177 1387C323 1563 539 1664 768 1664C1191 1664 1536 1319 1536 896ZM896 608C896 590 882 576 864 576H800C782 576 768 590 768 608V960H544C526 960 512 974 512 992V1056C512 1074 526 1088 544 1088H864C882 1088 896 1074 896 1056Z"/></svg></span><span class="bt tH" style="left:1148.25px">History</span><span class="bi" style="left:1213.4px"><svg class="fa " viewBox="0 0 1536 1792" width="12.00" height="14" style=""><path fill="currentColor" d="M1511 1056C1511 1039 1497 1024 1479 1024H1287C1272 1024 1262 1033 1257 1047C1240 1087 1228 1125 1204 1164C1111 1316 946 1408 768 1408C639 1408 514 1358 420 1270L557 1133C569 1121 576 1105 576 1088C576 1053 547 1024 512 1024H64C29 1024 0 1053 0 1088V1536C0 1571 29 1600 64 1600C81 1600 97 1593 109 1581L238 1452C380 1587 569 1664 764 1664C1133 1664 1425 1417 1510 1063C1511 1061 1511 1058 1511 1056ZM1536 256C1536 221 1507 192 1472 192C1455 192 1439 199 1427 211L1297 340C1155 206 964 128 768 128C399 128 104 374 18 729C18 731 18 734 18 736C18 753 32 768 50 768H249C264 768 274 759 279 745C296 705 308 667 332 628C425 476 590 384 768 384C897 384 1022 433 1117 521L979 659C967 671 960 687 960 704C960 739 989 768 1024 768H1472C1507 768 1536 739 1536 704Z"/></svg></span><span class="bt tR" style="left:1232.80px">Replenishment</span><span class="bi" style="left:1346.1px"><svg class="fa " viewBox="0 0 2304 1792" width="18.00" height="14" style=""><path fill="currentColor" d="M640 1632V1290L1024 1126V1440ZM576 1178 172 1005 576 832 980 1005ZM1664 1632V1290L2048 1126V1440ZM1600 1178 1196 1005 1600 832 2004 1005ZM1152 885V618L1536 454V720ZM1088 506 647 317 1088 128 1529 317ZM2176 1024C2176 973 2146 927 2098 906L1664 720V320C1664 269 1633 223 1586 202L1138 10C1122 3 1105 0 1088 0C1071 0 1054 3 1038 10L590 202C543 223 512 269 512 320V720L78 906C31 927 0 973 0 1024V1440C0 1488 27 1533 71 1554L519 1778C537 1788 556 1792 576 1792C596 1792 615 1788 633 1778L1081 1554C1084 1553 1086 1552 1088 1550C1090 1552 1092 1553 1095 1554L1543 1778C1561 1788 1580 1792 1600 1792C1620 1792 1639 1788 1657 1778L2105 1554C2149 1533 2176 1488 2176 1440Z"/></svg></span><span class="bt tL" style="left:1368.20px">Locations</span></div><div class="row odd h41" style="top:327px;height:41px"><span class="cb"></span><span class="c name">[FURN_0004] Letter Tray</span><span class="c n uc">₹ 0.00</span><span class="c n tv">₹ 0.00</span><span class="c n oh">0.00</span><svg class="fa pen" viewBox="0 0 1536 1792" width="12.00" height="14" style=""><path fill="currentColor" d="M363 1536H256V1408H128V1301L219 1210L454 1445ZM886 608C886 614 884 620 879 625L337 1167C332 1172 326 1174 320 1174C307 1174 298 1165 298 1152C298 1146 300 1140 305 1135L847 593C852 588 858 586 864 586C877 586 886 595 886 608ZM832 416 0 1248V1664H416L1248 832ZM1515 512C1515 478 1501 445 1478 421L1243 187C1219 163 1186 149 1152 149C1118 149 1085 163 1062 187L896 352L1312 768L1478 602C1501 579 1515 546 1515 512Z"/></svg><span class="c n fu">0.00</span><span class="c n inc">0.00</span><span class="c n out">0.00</span><span class="c unit">Units</span><span class="bi" style="left:1128.75px"><svg class="fa " viewBox="0 0 1536 1792" width="12.00" height="14" style=""><path fill="currentColor" d="M1536 896C1536 473 1191 128 768 128C571 128 380 207 239 340L109 211C91 192 63 187 40 197C16 207 0 230 0 256V704C0 739 29 768 64 768H512C538 768 561 752 571 728C581 705 576 677 557 659L420 521C513 434 637 384 768 384C1050 384 1280 614 1280 896C1280 1178 1050 1408 768 1408C609 1408 462 1336 364 1209C359 1202 350 1198 341 1197C332 1197 323 1200 316 1206L179 1344C168 1355 167 1374 177 1387C323 1563 539 1664 768 1664C1191 1664 1536 1319 1536 896ZM896 608C896 590 882 576 864 576H800C782 576 768 590 768 608V960H544C526 960 512 974 512 992V1056C512 1074 526 1088 544 1088H864C882 1088 896 1074 896 1056Z"/></svg></span><span class="bt tH" style="left:1148.25px">History</span><span class="bi" style="left:1213.4px"><svg class="fa " viewBox="0 0 1536 1792" width="12.00" height="14" style=""><path fill="currentColor" d="M1511 1056C1511 1039 1497 1024 1479 1024H1287C1272 1024 1262 1033 1257 1047C1240 1087 1228 1125 1204 1164C1111 1316 946 1408 768 1408C639 1408 514 1358 420 1270L557 1133C569 1121 576 1105 576 1088C576 1053 547 1024 512 1024H64C29 1024 0 1053 0 1088V1536C0 1571 29 1600 64 1600C81 1600 97 1593 109 1581L238 1452C380 1587 569 1664 764 1664C1133 1664 1425 1417 1510 1063C1511 1061 1511 1058 1511 1056ZM1536 256C1536 221 1507 192 1472 192C1455 192 1439 199 1427 211L1297 340C1155 206 964 128 768 128C399 128 104 374 18 729C18 731 18 734 18 736C18 753 32 768 50 768H249C264 768 274 759 279 745C296 705 308 667 332 628C425 476 590 384 768 384C897 384 1022 433 1117 521L979 659C967 671 960 687 960 704C960 739 989 768 1024 768H1472C1507 768 1536 739 1536 704Z"/></svg></span><span class="bt tR" style="left:1232.80px">Replenishment</span></div><div class="row h41" style="top:368px;height:41px"><span class="cb"></span><span class="c name">[FURN_0007] Newspaper Rack</span><span class="c n uc">₹ 0.00</span><span class="c n tv">₹ 0.00</span><span class="c n oh">0.00</span><svg class="fa pen" viewBox="0 0 1536 1792" width="12.00" height="14" style=""><path fill="currentColor" d="M363 1536H256V1408H128V1301L219 1210L454 1445ZM886 608C886 614 884 620 879 625L337 1167C332 1172 326 1174 320 1174C307 1174 298 1165 298 1152C298 1146 300 1140 305 1135L847 593C852 588 858 586 864 586C877 586 886 595 886 608ZM832 416 0 1248V1664H416L1248 832ZM1515 512C1515 478 1501 445 1478 421L1243 187C1219 163 1186 149 1152 149C1118 149 1085 163 1062 187L896 352L1312 768L1478 602C1501 579 1515 546 1515 512Z"/></svg><span class="c n fu">0.00</span><span class="c n inc">0.00</span><span class="c n out">0.00</span><span class="c unit">Units</span><span class="bi" style="left:1128.75px"><svg class="fa " viewBox="0 0 1536 1792" width="12.00" height="14" style=""><path fill="currentColor" d="M1536 896C1536 473 1191 128 768 128C571 128 380 207 239 340L109 211C91 192 63 187 40 197C16 207 0 230 0 256V704C0 739 29 768 64 768H512C538 768 561 752 571 728C581 705 576 677 557 659L420 521C513 434 637 384 768 384C1050 384 1280 614 1280 896C1280 1178 1050 1408 768 1408C609 1408 462 1336 364 1209C359 1202 350 1198 341 1197C332 1197 323 1200 316 1206L179 1344C168 1355 167 1374 177 1387C323 1563 539 1664 768 1664C1191 1664 1536 1319 1536 896ZM896 608C896 590 882 576 864 576H800C782 576 768 590 768 608V960H544C526 960 512 974 512 992V1056C512 1074 526 1088 544 1088H864C882 1088 896 1074 896 1056Z"/></svg></span><span class="bt tH" style="left:1148.25px">History</span><span class="bi" style="left:1213.4px"><svg class="fa " viewBox="0 0 1536 1792" width="12.00" height="14" style=""><path fill="currentColor" d="M1511 1056C1511 1039 1497 1024 1479 1024H1287C1272 1024 1262 1033 1257 1047C1240 1087 1228 1125 1204 1164C1111 1316 946 1408 768 1408C639 1408 514 1358 420 1270L557 1133C569 1121 576 1105 576 1088C576 1053 547 1024 512 1024H64C29 1024 0 1053 0 1088V1536C0 1571 29 1600 64 1600C81 1600 97 1593 109 1581L238 1452C380 1587 569 1664 764 1664C1133 1664 1425 1417 1510 1063C1511 1061 1511 1058 1511 1056ZM1536 256C1536 221 1507 192 1472 192C1455 192 1439 199 1427 211L1297 340C1155 206 964 128 768 128C399 128 104 374 18 729C18 731 18 734 18 736C18 753 32 768 50 768H249C264 768 274 759 279 745C296 705 308 667 332 628C425 476 590 384 768 384C897 384 1022 433 1117 521L979 659C967 671 960 687 960 704C960 739 989 768 1024 768H1472C1507 768 1536 739 1536 704Z"/></svg></span><span class="bt tR" style="left:1232.80px">Replenishment</span></div><div class="row odd h41" style="top:409px;height:41px"><span class="cb"></span><span class="c name">[FURN_0009] Whiteboard</span><span class="c n uc">₹ 85.30</span><span class="c n tv">₹ -85.30</span><span class="c n oh">-1.00</span><svg class="fa pen" viewBox="0 0 1536 1792" width="12.00" height="14" style=""><path fill="currentColor" d="M363 1536H256V1408H128V1301L219 1210L454 1445ZM886 608C886 614 884 620 879 625L337 1167C332 1172 326 1174 320 1174C307 1174 298 1165 298 1152C298 1146 300 1140 305 1135L847 593C852 588 858 586 864 586C877 586 886 595 886 608ZM832 416 0 1248V1664H416L1248 832ZM1515 512C1515 478 1501 445 1478 421L1243 187C1219 163 1186 149 1152 149C1118 149 1085 163 1062 187L896 352L1312 768L1478 602C1501 579 1515 546 1515 512Z"/></svg><span class="c n fu">-1.00</span><span class="c n inc">0.00</span><span class="c n out">0.00</span><span class="c unit">Units</span><span class="bi" style="left:1128.75px"><svg class="fa " viewBox="0 0 1536 1792" width="12.00" height="14" style=""><path fill="currentColor" d="M1536 896C1536 473 1191 128 768 128C571 128 380 207 239 340L109 211C91 192 63 187 40 197C16 207 0 230 0 256V704C0 739 29 768 64 768H512C538 768 561 752 571 728C581 705 576 677 557 659L420 521C513 434 637 384 768 384C1050 384 1280 614 1280 896C1280 1178 1050 1408 768 1408C609 1408 462 1336 364 1209C359 1202 350 1198 341 1197C332 1197 323 1200 316 1206L179 1344C168 1355 167 1374 177 1387C323 1563 539 1664 768 1664C1191 1664 1536 1319 1536 896ZM896 608C896 590 882 576 864 576H800C782 576 768 590 768 608V960H544C526 960 512 974 512 992V1056C512 1074 526 1088 544 1088H864C882 1088 896 1074 896 1056Z"/></svg></span><span class="bt tH" style="left:1148.25px">History</span><span class="bi" style="left:1213.4px"><svg class="fa " viewBox="0 0 1536 1792" width="12.00" height="14" style=""><path fill="currentColor" d="M1511 1056C1511 1039 1497 1024 1479 1024H1287C1272 1024 1262 1033 1257 1047C1240 1087 1228 1125 1204 1164C1111 1316 946 1408 768 1408C639 1408 514 1358 420 1270L557 1133C569 1121 576 1105 576 1088C576 1053 547 1024 512 1024H64C29 1024 0 1053 0 1088V1536C0 1571 29 1600 64 1600C81 1600 97 1593 109 1581L238 1452C380 1587 569 1664 764 1664C1133 1664 1425 1417 1510 1063C1511 1061 1511 1058 1511 1056ZM1536 256C1536 221 1507 192 1472 192C1455 192 1439 199 1427 211L1297 340C1155 206 964 128 768 128C399 128 104 374 18 729C18 731 18 734 18 736C18 753 32 768 50 768H249C264 768 274 759 279 745C296 705 308 667 332 628C425 476 590 384 768 384C897 384 1022 433 1117 521L979 659C967 671 960 687 960 704C960 739 989 768 1024 768H1472C1507 768 1536 739 1536 704Z"/></svg></span><span class="bt tR" style="left:1232.80px">Replenishment</span><span class="bi" style="left:1346.1px"><svg class="fa " viewBox="0 0 2304 1792" width="18.00" height="14" style=""><path fill="currentColor" d="M640 1632V1290L1024 1126V1440ZM576 1178 172 1005 576 832 980 1005ZM1664 1632V1290L2048 1126V1440ZM1600 1178 1196 1005 1600 832 2004 1005ZM1152 885V618L1536 454V720ZM1088 506 647 317 1088 128 1529 317ZM2176 1024C2176 973 2146 927 2098 906L1664 720V320C1664 269 1633 223 1586 202L1138 10C1122 3 1105 0 1088 0C1071 0 1054 3 1038 10L590 202C543 223 512 269 512 320V720L78 906C31 927 0 973 0 1024V1440C0 1488 27 1533 71 1554L519 1778C537 1788 556 1792 576 1792C596 1792 615 1788 633 1778L1081 1554C1084 1553 1086 1552 1088 1550C1090 1552 1092 1553 1095 1554L1543 1778C1561 1788 1580 1792 1600 1792C1620 1792 1639 1788 1657 1778L2105 1554C2149 1533 2176 1488 2176 1440Z"/></svg></span><span class="bt tL" style="left:1368.20px">Locations</span></div><div class="row" style="top:450px;height:40px"><span class="cb"></span><span class="c name">[FURN_6666] Acoustic Block Screens</span><span class="c n uc">₹ 210.00</span><span class="c n tv">₹ 6,090.00</span><span class="c n oh">29.00</span><svg class="fa pen" viewBox="0 0 1536 1792" width="12.00" height="14" style=""><path fill="currentColor" d="M363 1536H256V1408H128V1301L219 1210L454 1445ZM886 608C886 614 884 620 879 625L337 1167C332 1172 326 1174 320 1174C307 1174 298 1165 298 1152C298 1146 300 1140 305 1135L847 593C852 588 858 586 864 586C877 586 886 595 886 608ZM832 416 0 1248V1664H416L1248 832ZM1515 512C1515 478 1501 445 1478 421L1243 187C1219 163 1186 149 1152 149C1118 149 1085 163 1062 187L896 352L1312 768L1478 602C1501 579 1515 546 1515 512Z"/></svg><span class="c n fu">25.00</span><span class="c n inc">0.00</span><span class="c n out">4.00</span><span class="c unit">Units</span><span class="bi" style="left:1128.75px"><svg class="fa " viewBox="0 0 1536 1792" width="12.00" height="14" style=""><path fill="currentColor" d="M1536 896C1536 473 1191 128 768 128C571 128 380 207 239 340L109 211C91 192 63 187 40 197C16 207 0 230 0 256V704C0 739 29 768 64 768H512C538 768 561 752 571 728C581 705 576 677 557 659L420 521C513 434 637 384 768 384C1050 384 1280 614 1280 896C1280 1178 1050 1408 768 1408C609 1408 462 1336 364 1209C359 1202 350 1198 341 1197C332 1197 323 1200 316 1206L179 1344C168 1355 167 1374 177 1387C323 1563 539 1664 768 1664C1191 1664 1536 1319 1536 896ZM896 608C896 590 882 576 864 576H800C782 576 768 590 768 608V960H544C526 960 512 974 512 992V1056C512 1074 526 1088 544 1088H864C882 1088 896 1074 896 1056Z"/></svg></span><span class="bt tH" style="left:1148.25px">History</span><span class="bi" style="left:1213.4px"><svg class="fa " viewBox="0 0 1536 1792" width="12.00" height="14" style=""><path fill="currentColor" d="M1511 1056C1511 1039 1497 1024 1479 1024H1287C1272 1024 1262 1033 1257 1047C1240 1087 1228 1125 1204 1164C1111 1316 946 1408 768 1408C639 1408 514 1358 420 1270L557 1133C569 1121 576 1105 576 1088C576 1053 547 1024 512 1024H64C29 1024 0 1053 0 1088V1536C0 1571 29 1600 64 1600C81 1600 97 1593 109 1581L238 1452C380 1587 569 1664 764 1664C1133 1664 1425 1417 1510 1063C1511 1061 1511 1058 1511 1056ZM1536 256C1536 221 1507 192 1472 192C1455 192 1439 199 1427 211L1297 340C1155 206 964 128 768 128C399 128 104 374 18 729C18 731 18 734 18 736C18 753 32 768 50 768H249C264 768 274 759 279 745C296 705 308 667 332 628C425 476 590 384 768 384C897 384 1022 433 1117 521L979 659C967 671 960 687 960 704C960 739 989 768 1024 768H1472C1507 768 1536 739 1536 704Z"/></svg></span><span class="bt tR" style="left:1232.80px">Replenishment</span><span class="bi" style="left:1346.1px"><svg class="fa " viewBox="0 0 2304 1792" width="18.00" height="14" style=""><path fill="currentColor" d="M640 1632V1290L1024 1126V1440ZM576 1178 172 1005 576 832 980 1005ZM1664 1632V1290L2048 1126V1440ZM1600 1178 1196 1005 1600 832 2004 1005ZM1152 885V618L1536 454V720ZM1088 506 647 317 1088 128 1529 317ZM2176 1024C2176 973 2146 927 2098 906L1664 720V320C1664 269 1633 223 1586 202L1138 10C1122 3 1105 0 1088 0C1071 0 1054 3 1038 10L590 202C543 223 512 269 512 320V720L78 906C31 927 0 973 0 1024V1440C0 1488 27 1533 71 1554L519 1778C537 1788 556 1792 576 1792C596 1792 615 1788 633 1778L1081 1554C1084 1553 1086 1552 1088 1550C1090 1552 1092 1553 1095 1554L1543 1778C1561 1788 1580 1792 1600 1792C1620 1792 1639 1788 1657 1778L2105 1554C2149 1533 2176 1488 2176 1440Z"/></svg></span><span class="bt tL" style="left:1368.20px">Locations</span><span class="bi" style="left:1446.1px"><svg class="fa " viewBox="0 0 2048 1792" width="16.00" height="14" style=""><path fill="currentColor" d="M2048 1536H128V128H0V1664H2048ZM1664 512 1280 832 704 256 256 832V1408H1920Z"/></svg></span><span class="bt tF" style="left:1467.80px">Forecast</span></div><div class="row odd h41" style="top:490px;height:41px"><span class="cb"></span><span class="c name">[FURN_8855] Drawer</span><span class="c n uc">₹ 0.00</span><span class="c n tv">₹ 0.00</span><span class="c n oh">0.00</span><svg class="fa pen" viewBox="0 0 1536 1792" width="12.00" height="14" style=""><path fill="currentColor" d="M363 1536H256V1408H128V1301L219 1210L454 1445ZM886 608C886 614 884 620 879 625L337 1167C332 1172 326 1174 320 1174C307 1174 298 1165 298 1152C298 1146 300 1140 305 1135L847 593C852 588 858 586 864 586C877 586 886 595 886 608ZM832 416 0 1248V1664H416L1248 832ZM1515 512C1515 478 1501 445 1478 421L1243 187C1219 163 1186 149 1152 149C1118 149 1085 163 1062 187L896 352L1312 768L1478 602C1501 579 1515 546 1515 512Z"/></svg><span class="c n fu">0.00</span><span class="c n inc">0.00</span><span class="c n out">0.00</span><span class="c unit">Units</span><span class="bi" style="left:1128.75px"><svg class="fa " viewBox="0 0 1536 1792" width="12.00" height="14" style=""><path fill="currentColor" d="M1536 896C1536 473 1191 128 768 128C571 128 380 207 239 340L109 211C91 192 63 187 40 197C16 207 0 230 0 256V704C0 739 29 768 64 768H512C538 768 561 752 571 728C581 705 576 677 557 659L420 521C513 434 637 384 768 384C1050 384 1280 614 1280 896C1280 1178 1050 1408 768 1408C609 1408 462 1336 364 1209C359 1202 350 1198 341 1197C332 1197 323 1200 316 1206L179 1344C168 1355 167 1374 177 1387C323 1563 539 1664 768 1664C1191 1664 1536 1319 1536 896ZM896 608C896 590 882 576 864 576H800C782 576 768 590 768 608V960H544C526 960 512 974 512 992V1056C512 1074 526 1088 544 1088H864C882 1088 896 1074 896 1056Z"/></svg></span><span class="bt tH" style="left:1148.25px">History</span><span class="bi" style="left:1213.4px"><svg class="fa " viewBox="0 0 1536 1792" width="12.00" height="14" style=""><path fill="currentColor" d="M1511 1056C1511 1039 1497 1024 1479 1024H1287C1272 1024 1262 1033 1257 1047C1240 1087 1228 1125 1204 1164C1111 1316 946 1408 768 1408C639 1408 514 1358 420 1270L557 1133C569 1121 576 1105 576 1088C576 1053 547 1024 512 1024H64C29 1024 0 1053 0 1088V1536C0 1571 29 1600 64 1600C81 1600 97 1593 109 1581L238 1452C380 1587 569 1664 764 1664C1133 1664 1425 1417 1510 1063C1511 1061 1511 1058 1511 1056ZM1536 256C1536 221 1507 192 1472 192C1455 192 1439 199 1427 211L1297 340C1155 206 964 128 768 128C399 128 104 374 18 729C18 731 18 734 18 736C18 753 32 768 50 768H249C264 768 274 759 279 745C296 705 308 667 332 628C425 476 590 384 768 384C897 384 1022 433 1117 521L979 659C967 671 960 687 960 704C960 739 989 768 1024 768H1472C1507 768 1536 739 1536 704Z"/></svg></span><span class="bt tR" style="left:1232.80px">Replenishment</span></div><div class="row h41" style="top:531px;height:41px"><span class="cb"></span><span class="c name">[FURN_9001] Flipover</span><span class="c n uc">₹ 0.00</span><span class="c n tv">₹ 0.00</span><span class="c n oh">0.00</span><svg class="fa pen" viewBox="0 0 1536 1792" width="12.00" height="14" style=""><path fill="currentColor" d="M363 1536H256V1408H128V1301L219 1210L454 1445ZM886 608C886 614 884 620 879 625L337 1167C332 1172 326 1174 320 1174C307 1174 298 1165 298 1152C298 1146 300 1140 305 1135L847 593C852 588 858 586 864 586C877 586 886 595 886 608ZM832 416 0 1248V1664H416L1248 832ZM1515 512C1515 478 1501 445 1478 421L1243 187C1219 163 1186 149 1152 149C1118 149 1085 163 1062 187L896 352L1312 768L1478 602C1501 579 1515 546 1515 512Z"/></svg><span class="c n fu">0.00</span><span class="c n inc">0.00</span><span class="c n out">0.00</span><span class="c unit">Units</span><span class="bi" style="left:1128.75px"><svg class="fa " viewBox="0 0 1536 1792" width="12.00" height="14" style=""><path fill="currentColor" d="M1536 896C1536 473 1191 128 768 128C571 128 380 207 239 340L109 211C91 192 63 187 40 197C16 207 0 230 0 256V704C0 739 29 768 64 768H512C538 768 561 752 571 728C581 705 576 677 557 659L420 521C513 434 637 384 768 384C1050 384 1280 614 1280 896C1280 1178 1050 1408 768 1408C609 1408 462 1336 364 1209C359 1202 350 1198 341 1197C332 1197 323 1200 316 1206L179 1344C168 1355 167 1374 177 1387C323 1563 539 1664 768 1664C1191 1664 1536 1319 1536 896ZM896 608C896 590 882 576 864 576H800C782 576 768 590 768 608V960H544C526 960 512 974 512 992V1056C512 1074 526 1088 544 1088H864C882 1088 896 1074 896 1056Z"/></svg></span><span class="bt tH" style="left:1148.25px">History</span><span class="bi" style="left:1213.4px"><svg class="fa " viewBox="0 0 1536 1792" width="12.00" height="14" style=""><path fill="currentColor" d="M1511 1056C1511 1039 1497 1024 1479 1024H1287C1272 1024 1262 1033 1257 1047C1240 1087 1228 1125 1204 1164C1111 1316 946 1408 768 1408C639 1408 514 1358 420 1270L557 1133C569 1121 576 1105 576 1088C576 1053 547 1024 512 1024H64C29 1024 0 1053 0 1088V1536C0 1571 29 1600 64 1600C81 1600 97 1593 109 1581L238 1452C380 1587 569 1664 764 1664C1133 1664 1425 1417 1510 1063C1511 1061 1511 1058 1511 1056ZM1536 256C1536 221 1507 192 1472 192C1455 192 1439 199 1427 211L1297 340C1155 206 964 128 768 128C399 128 104 374 18 729C18 731 18 734 18 736C18 753 32 768 50 768H249C264 768 274 759 279 745C296 705 308 667 332 628C425 476 590 384 768 384C897 384 1022 433 1117 521L979 659C967 671 960 687 960 704C960 739 989 768 1024 768H1472C1507 768 1536 739 1536 704Z"/></svg></span><span class="bt tR" style="left:1232.80px">Replenishment</span></div><div class="row odd h41" style="top:572px;height:41px"><span class="cb"></span><span class="c name">[MAN-001] Table</span><span class="c n uc">₹ 0.00</span><span class="c n tv">₹ 0.00</span><span class="c n oh">0.00</span><svg class="fa pen" viewBox="0 0 1536 1792" width="12.00" height="14" style=""><path fill="currentColor" d="M363 1536H256V1408H128V1301L219 1210L454 1445ZM886 608C886 614 884 620 879 625L337 1167C332 1172 326 1174 320 1174C307 1174 298 1165 298 1152C298 1146 300 1140 305 1135L847 593C852 588 858 586 864 586C877 586 886 595 886 608ZM832 416 0 1248V1664H416L1248 832ZM1515 512C1515 478 1501 445 1478 421L1243 187C1219 163 1186 149 1152 149C1118 149 1085 163 1062 187L896 352L1312 768L1478 602C1501 579 1515 546 1515 512Z"/></svg><span class="c n fu">0.00</span><span class="c n inc">1.00</span><span class="c n out">0.00</span><span class="c unit">Units</span><span class="bi" style="left:1128.75px"><svg class="fa " viewBox="0 0 1536 1792" width="12.00" height="14" style=""><path fill="currentColor" d="M1536 896C1536 473 1191 128 768 128C571 128 380 207 239 340L109 211C91 192 63 187 40 197C16 207 0 230 0 256V704C0 739 29 768 64 768H512C538 768 561 752 571 728C581 705 576 677 557 659L420 521C513 434 637 384 768 384C1050 384 1280 614 1280 896C1280 1178 1050 1408 768 1408C609 1408 462 1336 364 1209C359 1202 350 1198 341 1197C332 1197 323 1200 316 1206L179 1344C168 1355 167 1374 177 1387C323 1563 539 1664 768 1664C1191 1664 1536 1319 1536 896ZM896 608C896 590 882 576 864 576H800C782 576 768 590 768 608V960H544C526 960 512 974 512 992V1056C512 1074 526 1088 544 1088H864C882 1088 896 1074 896 1056Z"/></svg></span><span class="bt tH" style="left:1148.25px">History</span><span class="bi" style="left:1213.4px"><svg class="fa " viewBox="0 0 1536 1792" width="12.00" height="14" style=""><path fill="currentColor" d="M1511 1056C1511 1039 1497 1024 1479 1024H1287C1272 1024 1262 1033 1257 1047C1240 1087 1228 1125 1204 1164C1111 1316 946 1408 768 1408C639 1408 514 1358 420 1270L557 1133C569 1121 576 1105 576 1088C576 1053 547 1024 512 1024H64C29 1024 0 1053 0 1088V1536C0 1571 29 1600 64 1600C81 1600 97 1593 109 1581L238 1452C380 1587 569 1664 764 1664C1133 1664 1425 1417 1510 1063C1511 1061 1511 1058 1511 1056ZM1536 256C1536 221 1507 192 1472 192C1455 192 1439 199 1427 211L1297 340C1155 206 964 128 768 128C399 128 104 374 18 729C18 731 18 734 18 736C18 753 32 768 50 768H249C264 768 274 759 279 745C296 705 308 667 332 628C425 476 590 384 768 384C897 384 1022 433 1117 521L979 659C967 671 960 687 960 704C960 739 989 768 1024 768H1472C1507 768 1536 739 1536 704Z"/></svg></span><span class="bt tR" style="left:1232.80px">Replenishment</span><span class="bi" style="left:1346.1px"><svg class="fa " viewBox="0 0 2048 1792" width="16.00" height="14" style=""><path fill="currentColor" d="M2048 1536H128V128H0V1664H2048ZM1664 512 1280 832 704 256 256 832V1408H1920Z"/></svg></span><span class="bt tF" style="left:1367.80px">Forecast</span></div><div class="row h41" style="top:613px;height:41px"><span class="cb"></span><span class="c name">Bolt</span><span class="c n uc">₹ 0.00</span><span class="c n tv">₹ 0.00</span><span class="c n oh">400.00</span><svg class="fa pen" viewBox="0 0 1536 1792" width="12.00" height="14" style=""><path fill="currentColor" d="M363 1536H256V1408H128V1301L219 1210L454 1445ZM886 608C886 614 884 620 879 625L337 1167C332 1172 326 1174 320 1174C307 1174 298 1165 298 1152C298 1146 300 1140 305 1135L847 593C852 588 858 586 864 586C877 586 886 595 886 608ZM832 416 0 1248V1664H416L1248 832ZM1515 512C1515 478 1501 445 1478 421L1243 187C1219 163 1186 149 1152 149C1118 149 1085 163 1062 187L896 352L1312 768L1478 602C1501 579 1515 546 1515 512Z"/></svg><span class="c n fu">396.00</span><span class="c n inc">0.00</span><span class="c n out">4.00</span><span class="c unit">Units</span><span class="bi" style="left:1128.75px"><svg class="fa " viewBox="0 0 1536 1792" width="12.00" height="14" style=""><path fill="currentColor" d="M1536 896C1536 473 1191 128 768 128C571 128 380 207 239 340L109 211C91 192 63 187 40 197C16 207 0 230 0 256V704C0 739 29 768 64 768H512C538 768 561 752 571 728C581 705 576 677 557 659L420 521C513 434 637 384 768 384C1050 384 1280 614 1280 896C1280 1178 1050 1408 768 1408C609 1408 462 1336 364 1209C359 1202 350 1198 341 1197C332 1197 323 1200 316 1206L179 1344C168 1355 167 1374 177 1387C323 1563 539 1664 768 1664C1191 1664 1536 1319 1536 896ZM896 608C896 590 882 576 864 576H800C782 576 768 590 768 608V960H544C526 960 512 974 512 992V1056C512 1074 526 1088 544 1088H864C882 1088 896 1074 896 1056Z"/></svg></span><span class="bt tH" style="left:1148.25px">History</span><span class="bi" style="left:1213.4px"><svg class="fa " viewBox="0 0 1536 1792" width="12.00" height="14" style=""><path fill="currentColor" d="M1511 1056C1511 1039 1497 1024 1479 1024H1287C1272 1024 1262 1033 1257 1047C1240 1087 1228 1125 1204 1164C1111 1316 946 1408 768 1408C639 1408 514 1358 420 1270L557 1133C569 1121 576 1105 576 1088C576 1053 547 1024 512 1024H64C29 1024 0 1053 0 1088V1536C0 1571 29 1600 64 1600C81 1600 97 1593 109 1581L238 1452C380 1587 569 1664 764 1664C1133 1664 1425 1417 1510 1063C1511 1061 1511 1058 1511 1056ZM1536 256C1536 221 1507 192 1472 192C1455 192 1439 199 1427 211L1297 340C1155 206 964 128 768 128C399 128 104 374 18 729C18 731 18 734 18 736C18 753 32 768 50 768H249C264 768 274 759 279 745C296 705 308 667 332 628C425 476 590 384 768 384C897 384 1022 433 1117 521L979 659C967 671 960 687 960 704C960 739 989 768 1024 768H1472C1507 768 1536 739 1536 704Z"/></svg></span><span class="bt tR" style="left:1232.80px">Replenishment</span><span class="bi" style="left:1346.1px"><svg class="fa " viewBox="0 0 2304 1792" width="18.00" height="14" style=""><path fill="currentColor" d="M640 1632V1290L1024 1126V1440ZM576 1178 172 1005 576 832 980 1005ZM1664 1632V1290L2048 1126V1440ZM1600 1178 1196 1005 1600 832 2004 1005ZM1152 885V618L1536 454V720ZM1088 506 647 317 1088 128 1529 317ZM2176 1024C2176 973 2146 927 2098 906L1664 720V320C1664 269 1633 223 1586 202L1138 10C1122 3 1105 0 1088 0C1071 0 1054 3 1038 10L590 202C543 223 512 269 512 320V720L78 906C31 927 0 973 0 1024V1440C0 1488 27 1533 71 1554L519 1778C537 1788 556 1792 576 1792C596 1792 615 1788 633 1778L1081 1554C1084 1553 1086 1552 1088 1550C1090 1552 1092 1553 1095 1554L1543 1778C1561 1788 1580 1792 1600 1792C1620 1792 1639 1788 1657 1778L2105 1554C2149 1533 2176 1488 2176 1440Z"/></svg></span><span class="bt tL" style="left:1368.20px">Locations</span><span class="bi" style="left:1446.1px"><svg class="fa " viewBox="0 0 2048 1792" width="16.00" height="14" style=""><path fill="currentColor" d="M2048 1536H128V128H0V1664H2048ZM1664 512 1280 832 704 256 256 832V1408H1920Z"/></svg></span><span class="bt tF" style="left:1467.80px">Forecast</span></div><div class="row odd h41" style="top:654px;height:41px"><span class="cb"></span><span class="c name">Table Leg</span><span class="c n uc">₹ 0.00</span><span class="c n tv">₹ 0.00</span><span class="c n oh">400.00</span><svg class="fa pen" viewBox="0 0 1536 1792" width="12.00" height="14" style=""><path fill="currentColor" d="M363 1536H256V1408H128V1301L219 1210L454 1445ZM886 608C886 614 884 620 879 625L337 1167C332 1172 326 1174 320 1174C307 1174 298 1165 298 1152C298 1146 300 1140 305 1135L847 593C852 588 858 586 864 586C877 586 886 595 886 608ZM832 416 0 1248V1664H416L1248 832ZM1515 512C1515 478 1501 445 1478 421L1243 187C1219 163 1186 149 1152 149C1118 149 1085 163 1062 187L896 352L1312 768L1478 602C1501 579 1515 546 1515 512Z"/></svg><span class="c n fu">396.00</span><span class="c n inc">0.00</span><span class="c n out">4.00</span><span class="c unit">Units</span><span class="bi" style="left:1128.75px"><svg class="fa " viewBox="0 0 1536 1792" width="12.00" height="14" style=""><path fill="currentColor" d="M1536 896C1536 473 1191 128 768 128C571 128 380 207 239 340L109 211C91 192 63 187 40 197C16 207 0 230 0 256V704C0 739 29 768 64 768H512C538 768 561 752 571 728C581 705 576 677 557 659L420 521C513 434 637 384 768 384C1050 384 1280 614 1280 896C1280 1178 1050 1408 768 1408C609 1408 462 1336 364 1209C359 1202 350 1198 341 1197C332 1197 323 1200 316 1206L179 1344C168 1355 167 1374 177 1387C323 1563 539 1664 768 1664C1191 1664 1536 1319 1536 896ZM896 608C896 590 882 576 864 576H800C782 576 768 590 768 608V960H544C526 960 512 974 512 992V1056C512 1074 526 1088 544 1088H864C882 1088 896 1074 896 1056Z"/></svg></span><span class="bt tH" style="left:1148.25px">History</span><span class="bi" style="left:1213.4px"><svg class="fa " viewBox="0 0 1536 1792" width="12.00" height="14" style=""><path fill="currentColor" d="M1511 1056C1511 1039 1497 1024 1479 1024H1287C1272 1024 1262 1033 1257 1047C1240 1087 1228 1125 1204 1164C1111 1316 946 1408 768 1408C639 1408 514 1358 420 1270L557 1133C569 1121 576 1105 576 1088C576 1053 547 1024 512 1024H64C29 1024 0 1053 0 1088V1536C0 1571 29 1600 64 1600C81 1600 97 1593 109 1581L238 1452C380 1587 569 1664 764 1664C1133 1664 1425 1417 1510 1063C1511 1061 1511 1058 1511 1056ZM1536 256C1536 221 1507 192 1472 192C1455 192 1439 199 1427 211L1297 340C1155 206 964 128 768 128C399 128 104 374 18 729C18 731 18 734 18 736C18 753 32 768 50 768H249C264 768 274 759 279 745C296 705 308 667 332 628C425 476 590 384 768 384C897 384 1022 433 1117 521L979 659C967 671 960 687 960 704C960 739 989 768 1024 768H1472C1507 768 1536 739 1536 704Z"/></svg></span><span class="bt tR" style="left:1232.80px">Replenishment</span><span class="bi" style="left:1346.1px"><svg class="fa " viewBox="0 0 2304 1792" width="18.00" height="14" style=""><path fill="currentColor" d="M640 1632V1290L1024 1126V1440ZM576 1178 172 1005 576 832 980 1005ZM1664 1632V1290L2048 1126V1440ZM1600 1178 1196 1005 1600 832 2004 1005ZM1152 885V618L1536 454V720ZM1088 506 647 317 1088 128 1529 317ZM2176 1024C2176 973 2146 927 2098 906L1664 720V320C1664 269 1633 223 1586 202L1138 10C1122 3 1105 0 1088 0C1071 0 1054 3 1038 10L590 202C543 223 512 269 512 320V720L78 906C31 927 0 973 0 1024V1440C0 1488 27 1533 71 1554L519 1778C537 1788 556 1792 576 1792C596 1792 615 1788 633 1778L1081 1554C1084 1553 1086 1552 1088 1550C1090 1552 1092 1553 1095 1554L1543 1778C1561 1788 1580 1792 1600 1792C1620 1792 1639 1788 1657 1778L2105 1554C2149 1533 2176 1488 2176 1440Z"/></svg></span><span class="bt tL" style="left:1368.20px">Locations</span><span class="bi" style="left:1446.1px"><svg class="fa " viewBox="0 0 2048 1792" width="16.00" height="14" style=""><path fill="currentColor" d="M2048 1536H128V128H0V1664H2048ZM1664 512 1280 832 704 256 256 832V1408H1920Z"/></svg></span><span class="bt tF" style="left:1467.80px">Forecast</span></div><div class="row h41" style="top:695px;height:41px"><span class="cb"></span><span class="c name">Table Top</span><span class="c n uc">₹ 0.00</span><span class="c n tv">₹ 0.00</span><span class="c n oh">100.00</span><svg class="fa pen" viewBox="0 0 1536 1792" width="12.00" height="14" style=""><path fill="currentColor" d="M363 1536H256V1408H128V1301L219 1210L454 1445ZM886 608C886 614 884 620 879 625L337 1167C332 1172 326 1174 320 1174C307 1174 298 1165 298 1152C298 1146 300 1140 305 1135L847 593C852 588 858 586 864 586C877 586 886 595 886 608ZM832 416 0 1248V1664H416L1248 832ZM1515 512C1515 478 1501 445 1478 421L1243 187C1219 163 1186 149 1152 149C1118 149 1085 163 1062 187L896 352L1312 768L1478 602C1501 579 1515 546 1515 512Z"/></svg><span class="c n fu">99.00</span><span class="c n inc">0.00</span><span class="c n out">1.00</span><span class="c unit">Units</span><span class="bi" style="left:1128.75px"><svg class="fa " viewBox="0 0 1536 1792" width="12.00" height="14" style=""><path fill="currentColor" d="M1536 896C1536 473 1191 128 768 128C571 128 380 207 239 340L109 211C91 192 63 187 40 197C16 207 0 230 0 256V704C0 739 29 768 64 768H512C538 768 561 752 571 728C581 705 576 677 557 659L420 521C513 434 637 384 768 384C1050 384 1280 614 1280 896C1280 1178 1050 1408 768 1408C609 1408 462 1336 364 1209C359 1202 350 1198 341 1197C332 1197 323 1200 316 1206L179 1344C168 1355 167 1374 177 1387C323 1563 539 1664 768 1664C1191 1664 1536 1319 1536 896ZM896 608C896 590 882 576 864 576H800C782 576 768 590 768 608V960H544C526 960 512 974 512 992V1056C512 1074 526 1088 544 1088H864C882 1088 896 1074 896 1056Z"/></svg></span><span class="bt tH" style="left:1148.25px">History</span><span class="bi" style="left:1213.4px"><svg class="fa " viewBox="0 0 1536 1792" width="12.00" height="14" style=""><path fill="currentColor" d="M1511 1056C1511 1039 1497 1024 1479 1024H1287C1272 1024 1262 1033 1257 1047C1240 1087 1228 1125 1204 1164C1111 1316 946 1408 768 1408C639 1408 514 1358 420 1270L557 1133C569 1121 576 1105 576 1088C576 1053 547 1024 512 1024H64C29 1024 0 1053 0 1088V1536C0 1571 29 1600 64 1600C81 1600 97 1593 109 1581L238 1452C380 1587 569 1664 764 1664C1133 1664 1425 1417 1510 1063C1511 1061 1511 1058 1511 1056ZM1536 256C1536 221 1507 192 1472 192C1455 192 1439 199 1427 211L1297 340C1155 206 964 128 768 128C399 128 104 374 18 729C18 731 18 734 18 736C18 753 32 768 50 768H249C264 768 274 759 279 745C296 705 308 667 332 628C425 476 590 384 768 384C897 384 1022 433 1117 521L979 659C967 671 960 687 960 704C960 739 989 768 1024 768H1472C1507 768 1536 739 1536 704Z"/></svg></span><span class="bt tR" style="left:1232.80px">Replenishment</span><span class="bi" style="left:1346.1px"><svg class="fa " viewBox="0 0 2304 1792" width="18.00" height="14" style=""><path fill="currentColor" d="M640 1632V1290L1024 1126V1440ZM576 1178 172 1005 576 832 980 1005ZM1664 1632V1290L2048 1126V1440ZM1600 1178 1196 1005 1600 832 2004 1005ZM1152 885V618L1536 454V720ZM1088 506 647 317 1088 128 1529 317ZM2176 1024C2176 973 2146 927 2098 906L1664 720V320C1664 269 1633 223 1586 202L1138 10C1122 3 1105 0 1088 0C1071 0 1054 3 1038 10L590 202C543 223 512 269 512 320V720L78 906C31 927 0 973 0 1024V1440C0 1488 27 1533 71 1554L519 1778C537 1788 556 1792 576 1792C596 1792 615 1788 633 1778L1081 1554C1084 1553 1086 1552 1088 1550C1090 1552 1092 1553 1095 1554L1543 1778C1561 1788 1580 1792 1600 1792C1620 1792 1639 1788 1657 1778L2105 1554C2149 1533 2176 1488 2176 1440Z"/></svg></span><span class="bt tL" style="left:1368.20px">Locations</span><span class="bi" style="left:1446.1px"><svg class="fa " viewBox="0 0 2048 1792" width="16.00" height="14" style=""><path fill="currentColor" d="M2048 1536H128V128H0V1664H2048ZM1664 512 1280 832 704 256 256 832V1408H1920Z"/></svg></span><span class="bt tF" style="left:1467.80px">Forecast</span></div>
 <div class="row foot" style="top:736px;height:40px"><span class="c n tv">₹ 21,397.30</span><span class="c n oh">1,051.00</span><span class="c n fu">1,014.00</span><span class="c n inc">1.00</span><span class="c n out">37.00</span></div>
</div>
</body></html>
